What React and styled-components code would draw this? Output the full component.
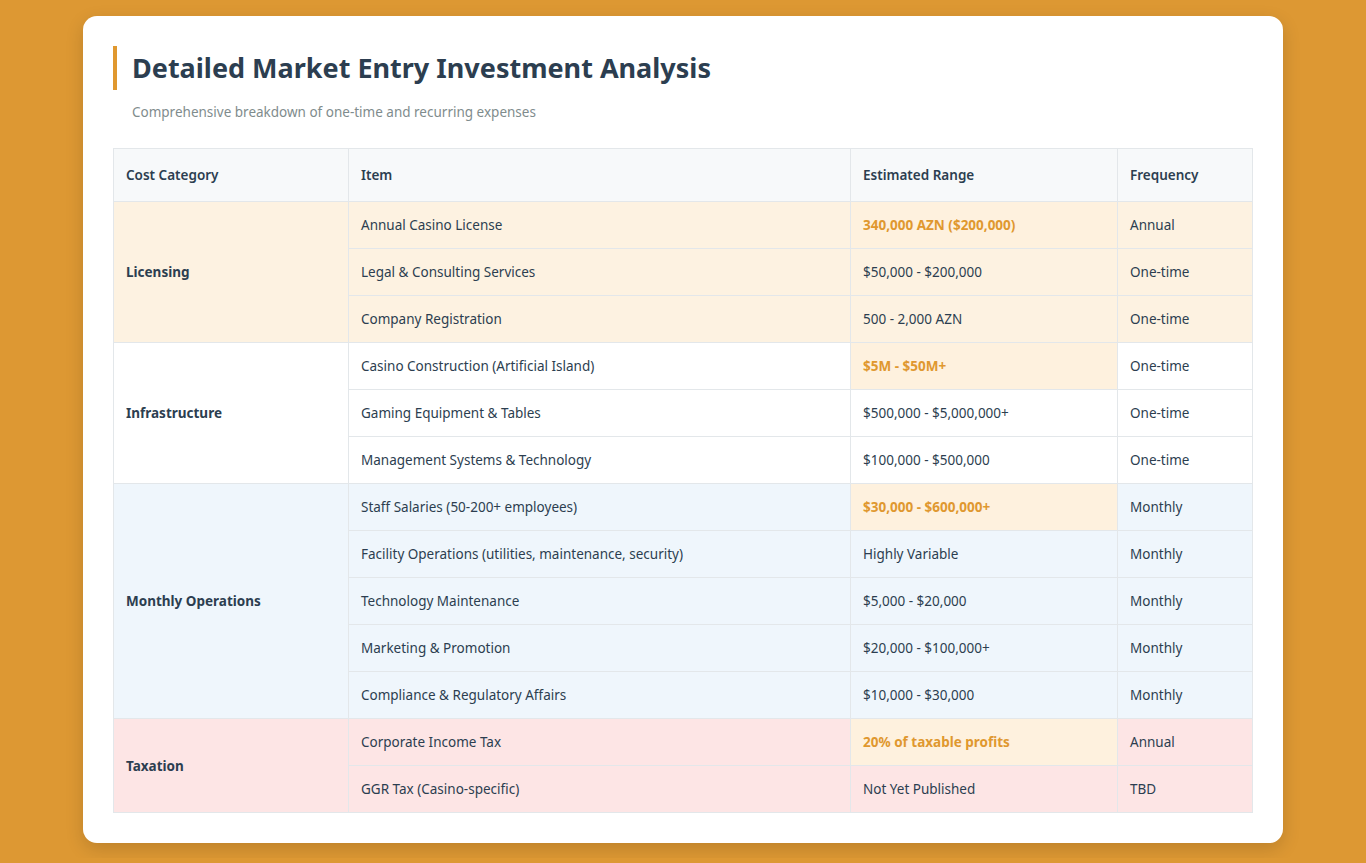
import React from "react";
import styled, { createGlobalStyle } from "styled-components";

const Global = createGlobalStyle`
  html, body { margin: 0; background: #dd9833; }
  body { font-family: "Noto Sans", "Open Sans", sans-serif; }
`;

const Page = styled.div`
  padding: 16px 83px 15px;
`;

const Card = styled.div`
  background: #fff;
  border-radius: 14px;
  padding: 30px 30px 30px;
  box-shadow: 0 6px 18px rgba(0,0,0,0.15);
`;

const Title = styled.h1`
  margin: 0;
  font-size: 27px;
  font-weight: 700;
  color: #2c3e50;
  border-left: 4px solid #e0982f;
  padding: 5px 0 5px 15px;
  line-height: 34px;
`;

const Sub = styled.p`
  margin: 13px 0 27px 19px;
  font-size: 13.5px;
  color: #7f8c8d;
`;

const Table = styled.table`
  width: 100%;
  border-collapse: collapse;
  font-size: 13.5px;
  color: #2c3e50;
`;

const Th = styled.th`
  text-align: left;
  font-weight: 600;
  background: #f7f9fa;
  border: 1px solid #e3e7ea;
  padding: 16px 12px;
  height: 20px;
`;

const bgs = { lic: "#fdf2e1", inf: "#ffffff", mon: "#eff6fc", tax: "#fde5e5" };

const Td = styled.td`
  border: 1px solid #e3e7ea;
  padding: 13px 12px;
  height: 20px;
  background: ${p => (p.$hl ? "#fef1de" : bgs[p.$g])};
  color: ${p => (p.$hl ? "#e0982f" : "#2c3e50")};
  font-weight: ${p => (p.$hl || p.$cat ? 700 : 400)};
`;

const groups = [
  ["lic", "Licensing", [
    ["Annual Casino License", "340,000 AZN ($200,000)", "Annual", true],
    ["Legal & Consulting Services", "$50,000 - $200,000", "One-time"],
    ["Company Registration", "500 - 2,000 AZN", "One-time"],
  ]],
  ["inf", "Infrastructure", [
    ["Casino Construction (Artificial Island)", "$5M - $50M+", "One-time", true],
    ["Gaming Equipment & Tables", "$500,000 - $5,000,000+", "One-time"],
    ["Management Systems & Technology", "$100,000 - $500,000", "One-time"],
  ]],
  ["mon", "Monthly Operations", [
    ["Staff Salaries (50-200+ employees)", "$30,000 - $600,000+", "Monthly", true],
    ["Facility Operations (utilities, maintenance, security)", "Highly Variable", "Monthly"],
    ["Technology Maintenance", "$5,000 - $20,000", "Monthly"],
    ["Marketing & Promotion", "$20,000 - $100,000+", "Monthly"],
    ["Compliance & Regulatory Affairs", "$10,000 - $30,000", "Monthly"],
  ]],
  ["tax", "Taxation", [
    ["Corporate Income Tax", "20% of taxable profits", "Annual", true],
    ["GGR Tax (Casino-specific)", "Not Yet Published", "TBD"],
  ]],
];

export default function App() {
  return (
    <Page>
      <Global />
      <Card>
        <Title>Detailed Market Entry Investment Analysis</Title>
        <Sub>Comprehensive breakdown of one-time and recurring expenses</Sub>
        <Table>
          <colgroup>
            <col style={{ width: 235 }} />
            <col style={{ width: 502 }} />
            <col style={{ width: 267 }} />
            <col />
          </colgroup>
          <thead>
            <tr><Th>Cost Category</Th><Th>Item</Th><Th>Estimated Range</Th><Th>Frequency</Th></tr>
          </thead>
          <tbody>
            {groups.map(([g, name, rows]) =>
              rows.map((r, i) => (
                <tr key={g + i}>
                  {i === 0 && <Td $g={g} $cat rowSpan={rows.length}>{name}</Td>}
                  <Td $g={g}>{r[0]}</Td>
                  <Td $g={g} $hl={r[3]}>{r[1]}</Td>
                  <Td $g={g}>{r[2]}</Td>
                </tr>
              ))
            )}
          </tbody>
        </Table>
      </Card>
    </Page>
  );
}
